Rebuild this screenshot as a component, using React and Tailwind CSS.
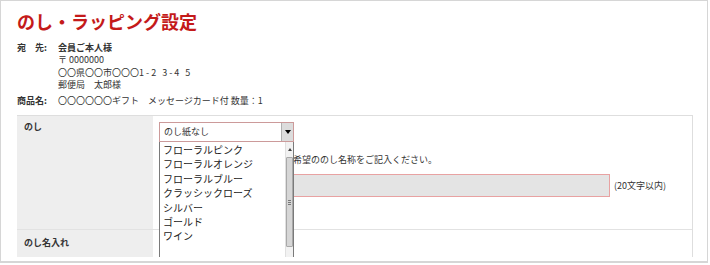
export default function App() {
  const items = [
    "フローラルピンク",
    "フローラルオレンジ",
    "フローラルブルー",
    "クラッシックローズ",
    "シルバー",
    "ゴールド",
    "ワイン",
  ];
  return (
    <div className="w-[710px] h-[265px] bg-white font-['Noto_Sans_CJK_JP',sans-serif] text-[#333]">
      <div className="w-[708px] h-[263px] border border-b-2 border-[#d6d6d6] overflow-hidden">
        <div className="h-[256px] overflow-hidden pl-4">
          <h1 className="pt-[8px] text-[18px] leading-[24px] font-bold text-[#c41a1a]">
            のし・ラッピング設定
          </h1>
          <div className="mt-[9px] text-[9px] leading-[12.4px]">
            <div className="flex">
              <div className="w-[41px] font-bold">宛　先:</div>
              <div>
                <div className="font-bold">会員ご本人様</div>
                <div>〒 0000000</div>
                <div>
                  〇〇県〇〇市〇〇〇<span className="tracking-[2px]">1-2 3-4 5</span>
                </div>
                <div>郵便局　太郎様</div>
              </div>
            </div>
            <div className="flex mt-[3px]">
              <div className="w-[41px] font-bold">商品名:</div>
              <div>〇〇〇〇〇〇ギフト　メッセージカード付 数量：1</div>
            </div>
          </div>
          <div className="mt-[8px] w-[676px] border-t border-r border-[#dedede] text-[9px]">
            <div className="flex h-[114px] border-b border-[#e2e2e2]">
              <div className="w-[136px] bg-[#eeeeee] px-[7px] pt-[5px] leading-[12px] font-bold">
                のし
              </div>
              <div className="relative flex-1 pl-[6px] pt-[6px]">
                <div className="flex w-[135px] h-[20px] border border-[#cc9a9a] bg-white">
                  <div className="flex-1 pl-[4px] leading-[18px]">のし紙なし</div>
                  <div className="w-[12px] h-full bg-[#dcdcdc] border-l border-[#b0b0b0] flex items-center justify-center">
                    <div className="w-0 h-0 border-l-[3px] border-r-[3px] border-t-[4px] border-l-transparent border-r-transparent border-t-black" />
                  </div>
                </div>
                <div className="mt-[12px] ml-[134px] leading-[12px] whitespace-nowrap">
                  希望ののし名称をご記入ください。
                </div>
                <div className="mt-[8px] flex items-center">
                  <div className="w-[451px] h-[23px] bg-[#e4e4e4] border border-[#e8a2a2]" />
                  <div className="ml-[4px] leading-[12px]">(20文字以内)</div>
                </div>
                <div className="absolute z-10 left-[6px] top-[26px] w-[135px] h-[130px] bg-white border-l border-r border-[#7a7a7a]">
                  <div className="pl-[3px] pt-[1px] text-[10px] leading-[14.4px] text-[#222]">
                    {items.map((t) => (
                      <div key={t}>{t}</div>
                    ))}
                  </div>
                  <div className="absolute right-0 top-0 w-[8px] h-full bg-[#f2f2f2] border-l border-[#e0e0e0]">
                    <div className="flex justify-center pt-[6px] h-[15px]">
                      <div className="w-0 h-0 border-l-[2px] border-r-[2px] border-b-[3px] border-l-transparent border-r-transparent border-b-[#444]" />
                    </div>
                    <div className="mx-auto w-[7px] h-[90px] bg-[#d6d6d6] border border-[#a9a9a9] rounded-[1px] flex flex-col items-center justify-center gap-[1px]">
                      <div className="w-[3px] h-px bg-[#777]" />
                      <div className="w-[3px] h-px bg-[#777]" />
                      <div className="w-[3px] h-px bg-[#777]" />
                    </div>
                  </div>
                </div>
              </div>
            </div>
            <div className="flex h-[40px]">
              <div className="w-[136px] bg-[#eeeeee] px-[7px] pt-[7px] leading-[12px] font-bold">
                のし名入れ
              </div>
              <div className="flex-1" />
            </div>
          </div>
        </div>
      </div>
    </div>
  );
}
